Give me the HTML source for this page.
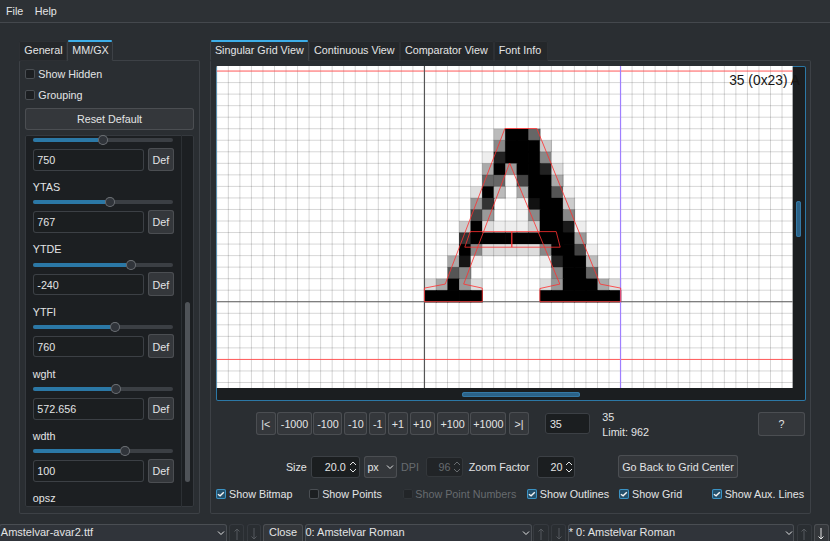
<!DOCTYPE html>
<html><head><meta charset="utf-8"><style>
html,body{margin:0;padding:0;width:830px;height:541px;overflow:hidden;background:#2a2e32;}
body{position:relative;font-family:"Liberation Sans", sans-serif;}
.b{position:absolute;box-sizing:border-box;}
.t{position:absolute;line-height:0;height:0;white-space:nowrap;}
svg.b{overflow:visible;}
</style></head><body>
<div class="b" style="left:0.00px;top:0.00px;width:830.00px;height:22.00px;background:#2d3135;"></div>
<div class="t" style="top:11.27px;font-size:10.75px;color:#e3e4e5;left:6.00px;">File</div>
<div class="t" style="top:11.27px;font-size:10.75px;color:#e3e4e5;left:34.70px;">Help</div>
<div class="b" style="left:0.00px;top:22.00px;width:830.00px;height:1.00px;background:#44484d;"></div>
<div class="b" style="left:19.40px;top:60.00px;width:180.80px;height:453.60px;background:#2a2e32;box-shadow:inset 0 0 0 1px #3d4146;border-radius:2px;"></div>
<div class="b" style="left:19.30px;top:40.50px;width:48.00px;height:20.00px;background:#24272a;box-shadow:inset 0 0 0 1px #2d3034;border-radius:2px;"></div>
<div class="b" style="left:67.00px;top:40.50px;width:45.70px;height:20.50px;background:#2a2e32;box-shadow:inset 0 0 0 1px #3d4146;border-radius:2px;"></div>
<div class="b" style="left:67.80px;top:60.00px;width:44.20px;height:1.50px;background:#2a2e32;"></div>
<div class="b" style="left:67.50px;top:40.30px;width:44.80px;height:1.90px;background:#3daee9;border-radius:1px;"></div>
<div class="t" style="top:50.17px;font-size:10.75px;color:#e3e4e5;left:24.30px;">General</div>
<div class="t" style="top:50.17px;font-size:10.75px;color:#e3e4e5;left:72.30px;">MM/GX</div>
<div class="b" style="left:25.00px;top:68.80px;width:10.00px;height:10.00px;background:#1c1f22;box-shadow:inset 0 0 0 1px #4a4e53;border-radius:2px;"></div>
<div class="t" style="top:74.07px;font-size:10.75px;color:#e3e4e5;left:38.30px;">Show Hidden</div>
<div class="b" style="left:25.00px;top:89.60px;width:10.00px;height:10.00px;background:#1c1f22;box-shadow:inset 0 0 0 1px #4a4e53;border-radius:2px;"></div>
<div class="t" style="top:94.77px;font-size:10.75px;color:#e3e4e5;left:38.30px;">Grouping</div>
<div class="b" style="left:25.00px;top:107.60px;width:168.90px;height:22.80px;background:#34373b;box-shadow:inset 0 0 0 1px #4b4e52;border-radius:3px;"></div>
<div class="t" style="top:119.07px;font-size:10.75px;color:#e3e4e5;left:-40.50px;width:300px;text-align:center;">Reset Default</div>
<div class="b" style="left:25px;top:135.4px;width:168.6px;height:371.8px;background:#1c1f22;box-shadow:inset 0 0 0 1px #35393e;border-radius:2px;overflow:hidden">
<div class="b" style="left:8.00px;top:2.80px;width:140.30px;height:4.00px;background:#3b3f44;border-radius:2px;"></div>
<div class="b" style="left:8.00px;top:2.80px;width:70.10px;height:4.00px;background:#2b78a6;border-radius:2px;"></div>
<div class="b" style="left:73.10px;top:-0.20px;width:10.00px;height:10.00px;background:#30343a;box-shadow:inset 0 0 0 1px #6b6f74;border-radius:5px;"></div>
<div class="b" style="left:8.30px;top:13.80px;width:110.90px;height:21.50px;background:#1b1e20;box-shadow:inset 0 0 0 1px #3c4045;border-radius:3px;"></div>
<div class="t" style="top:24.67px;font-size:10.75px;color:#e3e4e5;left:12.30px;">750</div>
<div class="b" style="left:122.80px;top:12.30px;width:26.00px;height:23.70px;background:#34373b;box-shadow:inset 0 0 0 1px #4b4e52;border-radius:3px;"></div>
<div class="t" style="top:24.67px;font-size:10.75px;color:#e3e4e5;left:-14.20px;width:300px;text-align:center;">Def</div>
<div class="t" style="top:51.71px;font-size:10.75px;color:#e3e4e5;left:7.80px;">YTAS</div>
<div class="b" style="left:8.00px;top:65.04px;width:140.30px;height:4.00px;background:#3b3f44;border-radius:2px;"></div>
<div class="b" style="left:8.00px;top:65.04px;width:77.00px;height:4.00px;background:#2b78a6;border-radius:2px;"></div>
<div class="b" style="left:80.00px;top:62.04px;width:10.00px;height:10.00px;background:#30343a;box-shadow:inset 0 0 0 1px #6b6f74;border-radius:5px;"></div>
<div class="b" style="left:8.30px;top:76.04px;width:110.90px;height:21.50px;background:#1b1e20;box-shadow:inset 0 0 0 1px #3c4045;border-radius:3px;"></div>
<div class="t" style="top:86.91px;font-size:10.75px;color:#e3e4e5;left:12.30px;">767</div>
<div class="b" style="left:122.80px;top:74.54px;width:26.00px;height:23.70px;background:#34373b;box-shadow:inset 0 0 0 1px #4b4e52;border-radius:3px;"></div>
<div class="t" style="top:86.91px;font-size:10.75px;color:#e3e4e5;left:-14.20px;width:300px;text-align:center;">Def</div>
<div class="t" style="top:113.95px;font-size:10.75px;color:#e3e4e5;left:7.80px;">YTDE</div>
<div class="b" style="left:8.00px;top:127.28px;width:140.30px;height:4.00px;background:#3b3f44;border-radius:2px;"></div>
<div class="b" style="left:8.00px;top:127.28px;width:98.40px;height:4.00px;background:#2b78a6;border-radius:2px;"></div>
<div class="b" style="left:101.40px;top:124.28px;width:10.00px;height:10.00px;background:#30343a;box-shadow:inset 0 0 0 1px #6b6f74;border-radius:5px;"></div>
<div class="b" style="left:8.30px;top:138.28px;width:110.90px;height:21.50px;background:#1b1e20;box-shadow:inset 0 0 0 1px #3c4045;border-radius:3px;"></div>
<div class="t" style="top:149.15px;font-size:10.75px;color:#e3e4e5;left:12.30px;">-240</div>
<div class="b" style="left:122.80px;top:136.78px;width:26.00px;height:23.70px;background:#34373b;box-shadow:inset 0 0 0 1px #4b4e52;border-radius:3px;"></div>
<div class="t" style="top:149.15px;font-size:10.75px;color:#e3e4e5;left:-14.20px;width:300px;text-align:center;">Def</div>
<div class="t" style="top:176.19px;font-size:10.75px;color:#e3e4e5;left:7.80px;">YTFI</div>
<div class="b" style="left:8.00px;top:189.52px;width:140.30px;height:4.00px;background:#3b3f44;border-radius:2px;"></div>
<div class="b" style="left:8.00px;top:189.52px;width:81.60px;height:4.00px;background:#2b78a6;border-radius:2px;"></div>
<div class="b" style="left:84.60px;top:186.52px;width:10.00px;height:10.00px;background:#30343a;box-shadow:inset 0 0 0 1px #6b6f74;border-radius:5px;"></div>
<div class="b" style="left:8.30px;top:200.52px;width:110.90px;height:21.50px;background:#1b1e20;box-shadow:inset 0 0 0 1px #3c4045;border-radius:3px;"></div>
<div class="t" style="top:211.39px;font-size:10.75px;color:#e3e4e5;left:12.30px;">760</div>
<div class="b" style="left:122.80px;top:199.02px;width:26.00px;height:23.70px;background:#34373b;box-shadow:inset 0 0 0 1px #4b4e52;border-radius:3px;"></div>
<div class="t" style="top:211.39px;font-size:10.75px;color:#e3e4e5;left:-14.20px;width:300px;text-align:center;">Def</div>
<div class="t" style="top:238.43px;font-size:10.75px;color:#e3e4e5;left:7.80px;">wght</div>
<div class="b" style="left:8.00px;top:251.76px;width:140.30px;height:4.00px;background:#3b3f44;border-radius:2px;"></div>
<div class="b" style="left:8.00px;top:251.76px;width:82.70px;height:4.00px;background:#2b78a6;border-radius:2px;"></div>
<div class="b" style="left:85.70px;top:248.76px;width:10.00px;height:10.00px;background:#30343a;box-shadow:inset 0 0 0 1px #6b6f74;border-radius:5px;"></div>
<div class="b" style="left:8.30px;top:262.76px;width:110.90px;height:21.50px;background:#1b1e20;box-shadow:inset 0 0 0 1px #3c4045;border-radius:3px;"></div>
<div class="t" style="top:273.63px;font-size:10.75px;color:#e3e4e5;left:12.30px;">572.656</div>
<div class="b" style="left:122.80px;top:261.26px;width:26.00px;height:23.70px;background:#34373b;box-shadow:inset 0 0 0 1px #4b4e52;border-radius:3px;"></div>
<div class="t" style="top:273.63px;font-size:10.75px;color:#e3e4e5;left:-14.20px;width:300px;text-align:center;">Def</div>
<div class="t" style="top:300.67px;font-size:10.75px;color:#e3e4e5;left:7.80px;">wdth</div>
<div class="b" style="left:8.00px;top:314.00px;width:140.30px;height:4.00px;background:#3b3f44;border-radius:2px;"></div>
<div class="b" style="left:8.00px;top:314.00px;width:92.10px;height:4.00px;background:#2b78a6;border-radius:2px;"></div>
<div class="b" style="left:95.10px;top:311.00px;width:10.00px;height:10.00px;background:#30343a;box-shadow:inset 0 0 0 1px #6b6f74;border-radius:5px;"></div>
<div class="b" style="left:8.30px;top:325.00px;width:110.90px;height:21.50px;background:#1b1e20;box-shadow:inset 0 0 0 1px #3c4045;border-radius:3px;"></div>
<div class="t" style="top:335.87px;font-size:10.75px;color:#e3e4e5;left:12.30px;">100</div>
<div class="b" style="left:122.80px;top:323.50px;width:26.00px;height:23.70px;background:#34373b;box-shadow:inset 0 0 0 1px #4b4e52;border-radius:3px;"></div>
<div class="t" style="top:335.87px;font-size:10.75px;color:#e3e4e5;left:-14.20px;width:300px;text-align:center;">Def</div>
<div class="t" style="top:362.91px;font-size:10.75px;color:#e3e4e5;left:7.80px;">opsz</div>
<div class="b" style="left:156.30px;top:0.00px;width:1.00px;height:371.40px;background:#2c3034;"></div>
<div class="b" style="left:160.20px;top:167.00px;width:4.70px;height:179.50px;background:#4f5358;border-radius:2.5px;"></div>
</div>
<div class="b" style="left:210.00px;top:60.00px;width:600.80px;height:453.60px;background:#2a2e32;box-shadow:inset 0 0 0 1px #3d4146;border-radius:2px;"></div>
<div class="b" style="left:308.60px;top:40.50px;width:91.60px;height:20.00px;background:#24272a;box-shadow:inset 0 0 0 1px #2d3034;border-radius:2px;"></div>
<div class="t" style="top:49.77px;font-size:10.75px;color:#e3e4e5;left:314.10px;">Continuous View</div>
<div class="b" style="left:400.20px;top:40.50px;width:94.20px;height:20.00px;background:#24272a;box-shadow:inset 0 0 0 1px #2d3034;border-radius:2px;"></div>
<div class="t" style="top:49.77px;font-size:10.75px;color:#e3e4e5;left:404.90px;">Comparator View</div>
<div class="b" style="left:494.40px;top:40.50px;width:53.60px;height:20.00px;background:#24272a;box-shadow:inset 0 0 0 1px #2d3034;border-radius:2px;"></div>
<div class="t" style="top:49.77px;font-size:10.75px;color:#e3e4e5;left:498.80px;">Font Info</div>
<div class="b" style="left:210.00px;top:40.50px;width:98.60px;height:20.50px;background:#2a2e32;box-shadow:inset 0 0 0 1px #3d4146;border-radius:2px;"></div>
<div class="b" style="left:211.00px;top:60.00px;width:96.80px;height:1.50px;background:#2a2e32;"></div>
<div class="b" style="left:210.50px;top:40.30px;width:97.60px;height:1.90px;background:#3daee9;border-radius:1px;"></div>
<div class="t" style="top:49.77px;font-size:10.75px;color:#e3e4e5;left:214.90px;">Singular Grid View</div>
<div class="b" style="left:215.50px;top:65.50px;width:590.00px;height:335.50px;background:#1b1e20;box-shadow:inset 0 0 0 1px #2c78a6;border-radius:2px;"></div>
<svg class="b" style="left:216px;top:66px" width="578" height="324" viewBox="216 66 578 324"><defs><clipPath id="cc"><rect x="216.5" y="66" width="576.30" height="322.10"/></clipPath></defs><g clip-path="url(#cc)"><rect x="216.5" y="66" width="576.3" height="322.1" fill="#ffffff"/><rect x="493.65" y="128.72" width="12.23" height="12.23" fill="rgb(187,187,187)"/><rect x="505.19" y="128.72" width="12.23" height="12.23" fill="rgb(0,0,0)"/><rect x="516.72" y="128.72" width="12.23" height="12.23" fill="rgb(0,0,0)"/><rect x="528.25" y="128.72" width="12.23" height="12.23" fill="rgb(102,102,102)"/><rect x="493.65" y="140.26" width="12.23" height="12.23" fill="rgb(136,136,136)"/><rect x="505.19" y="140.26" width="12.23" height="12.23" fill="rgb(0,0,0)"/><rect x="516.72" y="140.26" width="12.23" height="12.23" fill="rgb(0,0,0)"/><rect x="528.25" y="140.26" width="12.23" height="12.23" fill="rgb(0,0,0)"/><rect x="539.79" y="140.26" width="12.23" height="12.23" fill="rgb(204,204,204)"/><rect x="482.12" y="151.79" width="12.23" height="12.23" fill="rgb(238,238,238)"/><rect x="493.65" y="151.79" width="12.23" height="12.23" fill="rgb(34,34,34)"/><rect x="505.19" y="151.79" width="12.23" height="12.23" fill="rgb(0,0,0)"/><rect x="516.72" y="151.79" width="12.23" height="12.23" fill="rgb(0,0,0)"/><rect x="528.25" y="151.79" width="12.23" height="12.23" fill="rgb(0,0,0)"/><rect x="539.79" y="151.79" width="12.23" height="12.23" fill="rgb(136,136,136)"/><rect x="551.33" y="151.79" width="12.23" height="12.23" fill="rgb(245,245,245)"/><rect x="482.12" y="163.33" width="12.23" height="12.23" fill="rgb(170,170,170)"/><rect x="493.65" y="163.33" width="12.23" height="12.23" fill="rgb(0,0,0)"/><rect x="505.19" y="163.33" width="12.23" height="12.23" fill="rgb(153,153,153)"/><rect x="516.72" y="163.33" width="12.23" height="12.23" fill="rgb(0,0,0)"/><rect x="528.25" y="163.33" width="12.23" height="12.23" fill="rgb(0,0,0)"/><rect x="539.79" y="163.33" width="12.23" height="12.23" fill="rgb(34,34,34)"/><rect x="551.33" y="163.33" width="12.23" height="12.23" fill="rgb(221,221,221)"/><rect x="482.12" y="174.87" width="12.23" height="12.23" fill="rgb(102,102,102)"/><rect x="493.65" y="174.87" width="12.23" height="12.23" fill="rgb(102,102,102)"/><rect x="505.19" y="174.87" width="12.23" height="12.23" fill="rgb(245,245,245)"/><rect x="516.72" y="174.87" width="12.23" height="12.23" fill="rgb(68,68,68)"/><rect x="528.25" y="174.87" width="12.23" height="12.23" fill="rgb(0,0,0)"/><rect x="539.79" y="174.87" width="12.23" height="12.23" fill="rgb(0,0,0)"/><rect x="551.33" y="174.87" width="12.23" height="12.23" fill="rgb(170,170,170)"/><rect x="470.58" y="186.40" width="12.23" height="12.23" fill="rgb(224,224,224)"/><rect x="482.12" y="186.40" width="12.23" height="12.23" fill="rgb(0,0,0)"/><rect x="493.65" y="186.40" width="12.23" height="12.23" fill="rgb(187,187,187)"/><rect x="516.72" y="186.40" width="12.23" height="12.23" fill="rgb(170,170,170)"/><rect x="528.25" y="186.40" width="12.23" height="12.23" fill="rgb(0,0,0)"/><rect x="539.79" y="186.40" width="12.23" height="12.23" fill="rgb(0,0,0)"/><rect x="551.33" y="186.40" width="12.23" height="12.23" fill="rgb(85,85,85)"/><rect x="562.86" y="186.40" width="12.23" height="12.23" fill="rgb(240,240,240)"/><rect x="470.58" y="197.94" width="12.23" height="12.23" fill="rgb(153,153,153)"/><rect x="482.12" y="197.94" width="12.23" height="12.23" fill="rgb(51,51,51)"/><rect x="516.72" y="197.94" width="12.23" height="12.23" fill="rgb(238,238,238)"/><rect x="528.25" y="197.94" width="12.23" height="12.23" fill="rgb(17,17,17)"/><rect x="539.79" y="197.94" width="12.23" height="12.23" fill="rgb(0,0,0)"/><rect x="551.33" y="197.94" width="12.23" height="12.23" fill="rgb(0,0,0)"/><rect x="562.86" y="197.94" width="12.23" height="12.23" fill="rgb(204,204,204)"/><rect x="470.58" y="209.47" width="12.23" height="12.23" fill="rgb(68,68,68)"/><rect x="482.12" y="209.47" width="12.23" height="12.23" fill="rgb(153,153,153)"/><rect x="516.72" y="209.47" width="12.23" height="12.23" fill="rgb(245,245,245)"/><rect x="528.25" y="209.47" width="12.23" height="12.23" fill="rgb(136,136,136)"/><rect x="539.79" y="209.47" width="12.23" height="12.23" fill="rgb(0,0,0)"/><rect x="551.33" y="209.47" width="12.23" height="12.23" fill="rgb(0,0,0)"/><rect x="562.86" y="209.47" width="12.23" height="12.23" fill="rgb(136,136,136)"/><rect x="459.05" y="221.00" width="12.23" height="12.23" fill="rgb(204,204,204)"/><rect x="470.58" y="221.00" width="12.23" height="12.23" fill="rgb(0,0,0)"/><rect x="482.12" y="221.00" width="12.23" height="12.23" fill="rgb(221,221,221)"/><rect x="493.65" y="221.00" width="12.23" height="12.23" fill="rgb(238,238,238)"/><rect x="505.19" y="221.00" width="12.23" height="12.23" fill="rgb(238,238,238)"/><rect x="516.72" y="221.00" width="12.23" height="12.23" fill="rgb(238,238,238)"/><rect x="528.25" y="221.00" width="12.23" height="12.23" fill="rgb(204,204,204)"/><rect x="539.79" y="221.00" width="12.23" height="12.23" fill="rgb(0,0,0)"/><rect x="551.33" y="221.00" width="12.23" height="12.23" fill="rgb(0,0,0)"/><rect x="562.86" y="221.00" width="12.23" height="12.23" fill="rgb(26,26,26)"/><rect x="574.39" y="221.00" width="12.23" height="12.23" fill="rgb(238,238,238)"/><rect x="459.05" y="232.54" width="12.23" height="12.23" fill="rgb(51,51,51)"/><rect x="470.58" y="232.54" width="12.23" height="12.23" fill="rgb(0,0,0)"/><rect x="482.12" y="232.54" width="12.23" height="12.23" fill="rgb(0,0,0)"/><rect x="493.65" y="232.54" width="12.23" height="12.23" fill="rgb(0,0,0)"/><rect x="505.19" y="232.54" width="12.23" height="12.23" fill="rgb(0,0,0)"/><rect x="516.72" y="232.54" width="12.23" height="12.23" fill="rgb(0,0,0)"/><rect x="528.25" y="232.54" width="12.23" height="12.23" fill="rgb(0,0,0)"/><rect x="539.79" y="232.54" width="12.23" height="12.23" fill="rgb(0,0,0)"/><rect x="551.33" y="232.54" width="12.23" height="12.23" fill="rgb(0,0,0)"/><rect x="562.86" y="232.54" width="12.23" height="12.23" fill="rgb(0,0,0)"/><rect x="574.39" y="232.54" width="12.23" height="12.23" fill="rgb(153,153,153)"/><rect x="447.51" y="244.07" width="12.23" height="12.23" fill="rgb(238,238,238)"/><rect x="459.05" y="244.07" width="12.23" height="12.23" fill="rgb(0,0,0)"/><rect x="470.58" y="244.07" width="12.23" height="12.23" fill="rgb(136,136,136)"/><rect x="482.12" y="244.07" width="12.23" height="12.23" fill="rgb(221,221,221)"/><rect x="493.65" y="244.07" width="12.23" height="12.23" fill="rgb(221,221,221)"/><rect x="505.19" y="244.07" width="12.23" height="12.23" fill="rgb(221,221,221)"/><rect x="516.72" y="244.07" width="12.23" height="12.23" fill="rgb(221,221,221)"/><rect x="528.25" y="244.07" width="12.23" height="12.23" fill="rgb(221,221,221)"/><rect x="539.79" y="244.07" width="12.23" height="12.23" fill="rgb(136,136,136)"/><rect x="551.33" y="244.07" width="12.23" height="12.23" fill="rgb(0,0,0)"/><rect x="562.86" y="244.07" width="12.23" height="12.23" fill="rgb(0,0,0)"/><rect x="574.39" y="244.07" width="12.23" height="12.23" fill="rgb(68,68,68)"/><rect x="585.93" y="244.07" width="12.23" height="12.23" fill="rgb(240,240,240)"/><rect x="447.51" y="255.61" width="12.23" height="12.23" fill="rgb(170,170,170)"/><rect x="459.05" y="255.61" width="12.23" height="12.23" fill="rgb(21,21,21)"/><rect x="470.58" y="255.61" width="12.23" height="12.23" fill="rgb(238,238,238)"/><rect x="539.79" y="255.61" width="12.23" height="12.23" fill="rgb(238,238,238)"/><rect x="551.33" y="255.61" width="12.23" height="12.23" fill="rgb(34,34,34)"/><rect x="562.86" y="255.61" width="12.23" height="12.23" fill="rgb(0,0,0)"/><rect x="574.39" y="255.61" width="12.23" height="12.23" fill="rgb(0,0,0)"/><rect x="585.93" y="255.61" width="12.23" height="12.23" fill="rgb(187,187,187)"/><rect x="447.51" y="267.14" width="12.23" height="12.23" fill="rgb(85,85,85)"/><rect x="459.05" y="267.14" width="12.23" height="12.23" fill="rgb(136,136,136)"/><rect x="551.33" y="267.14" width="12.23" height="12.23" fill="rgb(136,136,136)"/><rect x="562.86" y="267.14" width="12.23" height="12.23" fill="rgb(0,0,0)"/><rect x="574.39" y="267.14" width="12.23" height="12.23" fill="rgb(0,0,0)"/><rect x="585.93" y="267.14" width="12.23" height="12.23" fill="rgb(102,102,102)"/><rect x="424.44" y="278.68" width="12.23" height="12.23" fill="rgb(221,221,221)"/><rect x="435.98" y="278.68" width="12.23" height="12.23" fill="rgb(170,170,170)"/><rect x="447.51" y="278.68" width="12.23" height="12.23" fill="rgb(0,0,0)"/><rect x="459.05" y="278.68" width="12.23" height="12.23" fill="rgb(153,153,153)"/><rect x="470.58" y="278.68" width="12.23" height="12.23" fill="rgb(221,221,221)"/><rect x="539.79" y="278.68" width="12.23" height="12.23" fill="rgb(221,221,221)"/><rect x="551.33" y="278.68" width="12.23" height="12.23" fill="rgb(153,153,153)"/><rect x="562.86" y="278.68" width="12.23" height="12.23" fill="rgb(0,0,0)"/><rect x="574.39" y="278.68" width="12.23" height="12.23" fill="rgb(0,0,0)"/><rect x="585.93" y="278.68" width="12.23" height="12.23" fill="rgb(0,0,0)"/><rect x="597.47" y="278.68" width="12.23" height="12.23" fill="rgb(170,170,170)"/><rect x="609.00" y="278.68" width="12.23" height="12.23" fill="rgb(221,221,221)"/><rect x="424.44" y="290.21" width="12.23" height="12.23" fill="rgb(0,0,0)"/><rect x="435.98" y="290.21" width="12.23" height="12.23" fill="rgb(0,0,0)"/><rect x="447.51" y="290.21" width="12.23" height="12.23" fill="rgb(0,0,0)"/><rect x="459.05" y="290.21" width="12.23" height="12.23" fill="rgb(0,0,0)"/><rect x="470.58" y="290.21" width="12.23" height="12.23" fill="rgb(0,0,0)"/><rect x="539.79" y="290.21" width="12.23" height="12.23" fill="rgb(0,0,0)"/><rect x="551.33" y="290.21" width="12.23" height="12.23" fill="rgb(0,0,0)"/><rect x="562.86" y="290.21" width="12.23" height="12.23" fill="rgb(0,0,0)"/><rect x="574.39" y="290.21" width="12.23" height="12.23" fill="rgb(0,0,0)"/><rect x="585.93" y="290.21" width="12.23" height="12.23" fill="rgb(0,0,0)"/><rect x="597.47" y="290.21" width="12.23" height="12.23" fill="rgb(0,0,0)"/><rect x="609.00" y="290.21" width="12.23" height="12.23" fill="rgb(0,0,0)"/><path d="M216.81 66V388.1M228.34 66V388.1M239.88 66V388.1M251.41 66V388.1M262.95 66V388.1M274.49 66V388.1M286.02 66V388.1M297.56 66V388.1M309.09 66V388.1M320.62 66V388.1M332.16 66V388.1M343.69 66V388.1M355.23 66V388.1M366.76 66V388.1M378.30 66V388.1M389.83 66V388.1M401.37 66V388.1M412.90 66V388.1M435.98 66V388.1M447.51 66V388.1M459.05 66V388.1M470.58 66V388.1M482.12 66V388.1M493.65 66V388.1M505.19 66V388.1M516.72 66V388.1M528.25 66V388.1M539.79 66V388.1M551.33 66V388.1M562.86 66V388.1M574.39 66V388.1M585.93 66V388.1M597.47 66V388.1M609.00 66V388.1M620.53 66V388.1M632.07 66V388.1M643.61 66V388.1M655.14 66V388.1M666.67 66V388.1M678.21 66V388.1M689.75 66V388.1M701.28 66V388.1M712.82 66V388.1M724.35 66V388.1M735.88 66V388.1M747.42 66V388.1M758.95 66V388.1M770.49 66V388.1M782.02 66V388.1M216.5 82.59H792.8M216.5 94.12H792.8M216.5 105.66H792.8M216.5 117.19H792.8M216.5 128.72H792.8M216.5 140.26H792.8M216.5 151.79H792.8M216.5 163.33H792.8M216.5 174.87H792.8M216.5 186.40H792.8M216.5 197.94H792.8M216.5 209.47H792.8M216.5 221.00H792.8M216.5 232.54H792.8M216.5 244.07H792.8M216.5 255.61H792.8M216.5 267.14H792.8M216.5 278.68H792.8M216.5 290.21H792.8M216.5 313.29H792.8M216.5 324.82H792.8M216.5 336.36H792.8M216.5 347.89H792.8M216.5 370.96H792.8M216.5 382.50H792.8" stroke="#000000" stroke-width="1" fill="none" opacity="0.16"/><path d="M216.5 71.05H792.8M216.5 359.43H792.8" stroke="#ff4545" stroke-width="1" fill="none" opacity="0.9"/><path d="M424.44 66V388.1M216.5 301.75H792.8" stroke="#555555" stroke-width="1.2" fill="none"/><path d="M620.53 66V388.1" stroke="#9f7fff" stroke-width="1.2" fill="none"/><path d="M424.40 301.70L424.40 288.10L445.20 284.10L504.90 128.50L536.80 128.50L600.20 284.10L620.70 288.10L620.70 301.70L539.90 301.70L539.90 288.50L559.80 284.10L509.60 163.00L463.70 284.10L482.30 288.10L482.30 301.70ZM470.20 231.60L511.80 231.60L511.80 247.20L464.80 247.20ZM511.80 231.60L556.20 231.60L560.20 247.20L511.80 247.20Z" stroke="#ff3030" stroke-width="0.9" opacity="0.9" fill="none" stroke-linejoin="miter"/></g></svg>
<div class="b" style="left:796.00px;top:200.50px;width:5.00px;height:36.60px;background:#2b6288;box-shadow:inset 0 0 0 1px #3479a6;border-radius:2.5px;"></div>
<div class="b" style="left:461.60px;top:392.00px;width:118.50px;height:5.00px;background:#2b6288;box-shadow:inset 0 0 0 1px #3479a6;border-radius:2.5px;"></div>
<div class="t" style="top:81.02px;font-size:13.8px;color:#151515;left:729.20px;">35 (0x23) A</div>
<div class="b" style="left:255.80px;top:412.20px;width:20.00px;height:23.20px;background:#34373b;box-shadow:inset 0 0 0 1px #4b4e52;border-radius:3px;"></div>
<div class="t" style="top:424.47px;font-size:10.75px;color:#e3e4e5;left:115.80px;width:300px;text-align:center;">|&lt;</div>
<div class="b" style="left:277.10px;top:412.20px;width:34.90px;height:23.20px;background:#34373b;box-shadow:inset 0 0 0 1px #4b4e52;border-radius:3px;"></div>
<div class="t" style="top:424.47px;font-size:10.75px;color:#e3e4e5;left:144.55px;width:300px;text-align:center;">-1000</div>
<div class="b" style="left:313.30px;top:412.20px;width:29.20px;height:23.20px;background:#34373b;box-shadow:inset 0 0 0 1px #4b4e52;border-radius:3px;"></div>
<div class="t" style="top:424.47px;font-size:10.75px;color:#e3e4e5;left:177.90px;width:300px;text-align:center;">-100</div>
<div class="b" style="left:344.30px;top:412.20px;width:23.20px;height:23.20px;background:#34373b;box-shadow:inset 0 0 0 1px #4b4e52;border-radius:3px;"></div>
<div class="t" style="top:424.47px;font-size:10.75px;color:#e3e4e5;left:205.90px;width:300px;text-align:center;">-10</div>
<div class="b" style="left:368.90px;top:412.20px;width:17.60px;height:23.20px;background:#34373b;box-shadow:inset 0 0 0 1px #4b4e52;border-radius:3px;"></div>
<div class="t" style="top:424.47px;font-size:10.75px;color:#e3e4e5;left:227.70px;width:300px;text-align:center;">-1</div>
<div class="b" style="left:388.10px;top:412.20px;width:19.60px;height:23.20px;background:#34373b;box-shadow:inset 0 0 0 1px #4b4e52;border-radius:3px;"></div>
<div class="t" style="top:424.47px;font-size:10.75px;color:#e3e4e5;left:247.90px;width:300px;text-align:center;">+1</div>
<div class="b" style="left:409.50px;top:412.20px;width:25.30px;height:23.20px;background:#34373b;box-shadow:inset 0 0 0 1px #4b4e52;border-radius:3px;"></div>
<div class="t" style="top:424.47px;font-size:10.75px;color:#e3e4e5;left:272.15px;width:300px;text-align:center;">+10</div>
<div class="b" style="left:436.60px;top:412.20px;width:32.00px;height:23.20px;background:#34373b;box-shadow:inset 0 0 0 1px #4b4e52;border-radius:3px;"></div>
<div class="t" style="top:424.47px;font-size:10.75px;color:#e3e4e5;left:302.60px;width:300px;text-align:center;">+100</div>
<div class="b" style="left:470.40px;top:412.20px;width:36.10px;height:23.20px;background:#34373b;box-shadow:inset 0 0 0 1px #4b4e52;border-radius:3px;"></div>
<div class="t" style="top:424.47px;font-size:10.75px;color:#e3e4e5;left:338.45px;width:300px;text-align:center;">+1000</div>
<div class="b" style="left:509.20px;top:412.20px;width:19.50px;height:23.20px;background:#34373b;box-shadow:inset 0 0 0 1px #4b4e52;border-radius:3px;"></div>
<div class="t" style="top:424.47px;font-size:10.75px;color:#e3e4e5;left:368.95px;width:300px;text-align:center;">&gt;|</div>
<div class="b" style="left:545.40px;top:413.00px;width:45.10px;height:21.30px;background:#1b1e20;box-shadow:inset 0 0 0 1px #3c4045;border-radius:3px;"></div>
<div class="t" style="top:424.47px;font-size:10.75px;color:#e3e4e5;left:549.90px;">35</div>
<div class="t" style="top:417.07px;font-size:10.75px;color:#e3e4e5;left:602.30px;">35</div>
<div class="t" style="top:432.27px;font-size:10.75px;color:#e3e4e5;left:602.30px;">Limit: 962</div>
<div class="b" style="left:757.90px;top:412.10px;width:47.20px;height:23.50px;background:#34373b;box-shadow:inset 0 0 0 1px #4b4e52;border-radius:3px;"></div>
<div class="t" style="top:424.47px;font-size:10.75px;color:#e3e4e5;left:631.50px;width:300px;text-align:center;">?</div>
<div class="t" style="top:467.37px;font-size:10.75px;color:#e3e4e5;left:285.90px;">Size</div>
<div class="b" style="left:311.20px;top:456.40px;width:48.40px;height:21.40px;background:#1b1e20;box-shadow:inset 0 0 0 1px #3c4045;border-radius:3px;"></div>
<div class="t" style="top:467.37px;font-size:10.75px;color:#e3e4e5;left:45.80px;width:300px;text-align:right;">20.0</div>
<svg class="b" style="left:348.90px;top:459.10px" width="8" height="16" viewBox="0 0 8 16"><path d="M1 6 L4 3 L7 6 M1 10 L4 13 L7 10" stroke="#e3e4e5" stroke-width="1" fill="none"/></svg>
<div class="b" style="left:364.00px;top:456.40px;width:32.70px;height:21.40px;background:#34373b;box-shadow:inset 0 0 0 1px #4b4e52;border-radius:3px;"></div>
<div class="t" style="top:467.37px;font-size:10.75px;color:#e3e4e5;left:367.40px;">px</div>
<svg class="b" style="left:386px;top:464px" width="8" height="6" viewBox="0 0 8 6"><path d="M1 1.5 L4 4.5 L7 1.5" stroke="#e3e4e5" stroke-width="1" fill="none"/></svg>
<div class="t" style="top:467.37px;font-size:10.75px;color:#676b6f;left:401.10px;">DPI</div>
<div class="b" style="left:425.60px;top:456.90px;width:37.40px;height:20.10px;background:#212427;box-shadow:inset 0 0 0 1px #33373b;border-radius:3px;"></div>
<div class="t" style="top:467.37px;font-size:10.75px;color:#676b6f;left:150.40px;width:300px;text-align:right;">96</div>
<svg class="b" style="left:452.50px;top:458.95px" width="8" height="16" viewBox="0 0 8 16"><path d="M1 6 L4 3 L7 6 M1 10 L4 13 L7 10" stroke="#676b6f" stroke-width="1" fill="none"/></svg>
<div class="t" style="top:467.37px;font-size:10.75px;color:#e3e4e5;left:468.70px;">Zoom Factor</div>
<div class="b" style="left:536.90px;top:456.40px;width:38.20px;height:21.40px;background:#1b1e20;box-shadow:inset 0 0 0 1px #3c4045;border-radius:3px;"></div>
<div class="t" style="top:467.37px;font-size:10.75px;color:#e3e4e5;left:262.50px;width:300px;text-align:right;">20</div>
<svg class="b" style="left:564.50px;top:459.10px" width="8" height="16" viewBox="0 0 8 16"><path d="M1 6 L4 3 L7 6 M1 10 L4 13 L7 10" stroke="#e3e4e5" stroke-width="1" fill="none"/></svg>
<div class="b" style="left:618.30px;top:455.40px;width:119.50px;height:23.10px;background:#34373b;box-shadow:inset 0 0 0 1px #4b4e52;border-radius:3px;"></div>
<div class="t" style="top:467.37px;font-size:10.75px;color:#e3e4e5;left:528.05px;width:300px;text-align:center;">Go Back to Grid Center</div>
<div class="b" style="left:215.60px;top:489.30px;width:10.00px;height:10.00px;background:#25506b;box-shadow:inset 0 0 0 1px #3b93c4;border-radius:2px;"></div>
<svg class="b" style="left:215.60px;top:489.30px" width="10" height="10" viewBox="0 0 10 10"><path d="M1.9 5.2 L4.1 6.8 L7.8 3.2" stroke="#f4f4f4" stroke-width="1.4" fill="none"/></svg>
<div class="t" style="top:494.27px;font-size:10.75px;color:#e3e4e5;left:229.10px;">Show Bitmap</div>
<div class="b" style="left:309.20px;top:489.30px;width:10.00px;height:10.00px;background:#1c1f22;box-shadow:inset 0 0 0 1px #4a4e53;border-radius:2px;"></div>
<div class="t" style="top:494.27px;font-size:10.75px;color:#e3e4e5;left:322.20px;">Show Points</div>
<div class="b" style="left:402.50px;top:489.30px;width:10.00px;height:10.00px;background:#222528;box-shadow:inset 0 0 0 1px #303438;border-radius:2px;"></div>
<div class="t" style="top:494.27px;font-size:10.75px;color:#676b6f;left:415.30px;">Show Point Numbers</div>
<div class="b" style="left:527.00px;top:489.30px;width:10.00px;height:10.00px;background:#25506b;box-shadow:inset 0 0 0 1px #3b93c4;border-radius:2px;"></div>
<svg class="b" style="left:527.00px;top:489.30px" width="10" height="10" viewBox="0 0 10 10"><path d="M1.9 5.2 L4.1 6.8 L7.8 3.2" stroke="#f4f4f4" stroke-width="1.4" fill="none"/></svg>
<div class="t" style="top:494.27px;font-size:10.75px;color:#e3e4e5;left:539.80px;">Show Outlines</div>
<div class="b" style="left:618.90px;top:489.30px;width:10.00px;height:10.00px;background:#25506b;box-shadow:inset 0 0 0 1px #3b93c4;border-radius:2px;"></div>
<svg class="b" style="left:618.90px;top:489.30px" width="10" height="10" viewBox="0 0 10 10"><path d="M1.9 5.2 L4.1 6.8 L7.8 3.2" stroke="#f4f4f4" stroke-width="1.4" fill="none"/></svg>
<div class="t" style="top:494.27px;font-size:10.75px;color:#e3e4e5;left:632.00px;">Show Grid</div>
<div class="b" style="left:711.90px;top:489.30px;width:10.00px;height:10.00px;background:#25506b;box-shadow:inset 0 0 0 1px #3b93c4;border-radius:2px;"></div>
<svg class="b" style="left:711.90px;top:489.30px" width="10" height="10" viewBox="0 0 10 10"><path d="M1.9 5.2 L4.1 6.8 L7.8 3.2" stroke="#f4f4f4" stroke-width="1.4" fill="none"/></svg>
<div class="t" style="top:494.27px;font-size:10.75px;color:#e3e4e5;left:724.70px;">Show Aux. Lines</div>
<div class="b" style="left:-1.00px;top:523.80px;width:227.80px;height:21.20px;background:#30343a;box-shadow:inset 0 0 0 1px #4a4e53;border-radius:3px;"></div>
<div class="t" style="top:532.29px;font-size:11px;color:#e3e4e5;left:0.80px;">Amstelvar-avar2.ttf</div>
<svg class="b" style="left:216.80px;top:530px" width="8" height="6" viewBox="0 0 8 6"><path d="M1 1.5 L4 4.5 L7 1.5" stroke="#e3e4e5" stroke-width="1" fill="none"/></svg>
<div class="b" style="left:229.00px;top:523.80px;width:15.30px;height:21.20px;background:#2a2e32;box-shadow:inset 0 0 0 1px #363a3f;border-radius:3px;"></div>
<svg class="b" style="left:232.65px;top:527px" width="8" height="14" viewBox="0 0 8 14"><path d="M4 2 V13 M1.5 4.5 L4 2 L6.5 4.5" stroke="#55595e" stroke-width="1" fill="none"/></svg>
<div class="b" style="left:246.50px;top:523.80px;width:14.80px;height:21.20px;background:#2a2e32;box-shadow:inset 0 0 0 1px #363a3f;border-radius:3px;"></div>
<svg class="b" style="left:249.90px;top:527px" width="8" height="14" viewBox="0 0 8 14"><path d="M4 1 V12 M1.5 9.5 L4 12 L6.5 9.5" stroke="#55595e" stroke-width="1" fill="none"/></svg>
<div class="b" style="left:263.40px;top:523.80px;width:39.20px;height:21.20px;background:#34373b;box-shadow:inset 0 0 0 1px #4b4e52;border-radius:3px;"></div>
<div class="t" style="top:532.29px;font-size:11px;color:#e3e4e5;left:133.00px;width:300px;text-align:center;">Close</div>
<div class="b" style="left:304.70px;top:523.80px;width:226.90px;height:21.20px;background:#30343a;box-shadow:inset 0 0 0 1px #4a4e53;border-radius:3px;"></div>
<div class="t" style="top:532.29px;font-size:11px;color:#e3e4e5;left:305.50px;">0: Amstelvar Roman</div>
<svg class="b" style="left:521.60px;top:530px" width="8" height="6" viewBox="0 0 8 6"><path d="M1 1.5 L4 4.5 L7 1.5" stroke="#e3e4e5" stroke-width="1" fill="none"/></svg>
<div class="b" style="left:533.10px;top:523.80px;width:16.10px;height:21.20px;background:#2a2e32;box-shadow:inset 0 0 0 1px #363a3f;border-radius:3px;"></div>
<svg class="b" style="left:537.15px;top:527px" width="8" height="14" viewBox="0 0 8 14"><path d="M4 2 V13 M1.5 4.5 L4 2 L6.5 4.5" stroke="#55595e" stroke-width="1" fill="none"/></svg>
<div class="b" style="left:550.80px;top:523.80px;width:15.70px;height:21.20px;background:#2a2e32;box-shadow:inset 0 0 0 1px #363a3f;border-radius:3px;"></div>
<svg class="b" style="left:554.65px;top:527px" width="8" height="14" viewBox="0 0 8 14"><path d="M4 1 V12 M1.5 9.5 L4 12 L6.5 9.5" stroke="#55595e" stroke-width="1" fill="none"/></svg>
<div class="b" style="left:568.10px;top:523.80px;width:226.40px;height:21.20px;background:#30343a;box-shadow:inset 0 0 0 1px #4a4e53;border-radius:3px;"></div>
<div class="t" style="top:532.29px;font-size:11px;color:#e3e4e5;left:568.70px;">* 0: Amstelvar Roman</div>
<svg class="b" style="left:784.50px;top:530px" width="8" height="6" viewBox="0 0 8 6"><path d="M1 1.5 L4 4.5 L7 1.5" stroke="#e3e4e5" stroke-width="1" fill="none"/></svg>
<div class="b" style="left:796.60px;top:523.80px;width:15.10px;height:21.20px;background:#2a2e32;box-shadow:inset 0 0 0 1px #363a3f;border-radius:3px;"></div>
<svg class="b" style="left:800.15px;top:527px" width="8" height="14" viewBox="0 0 8 14"><path d="M4 2 V13 M1.5 4.5 L4 2 L6.5 4.5" stroke="#55595e" stroke-width="1" fill="none"/></svg>
<div class="b" style="left:813.60px;top:523.80px;width:15.50px;height:21.20px;background:#34373b;box-shadow:inset 0 0 0 1px #4b4e52;border-radius:3px;"></div>
<svg class="b" style="left:817.35px;top:527px" width="8" height="14" viewBox="0 0 8 14"><path d="M4 1 V12 M1.5 9.5 L4 12 L6.5 9.5" stroke="#e3e4e5" stroke-width="1" fill="none"/></svg>
</body></html>
